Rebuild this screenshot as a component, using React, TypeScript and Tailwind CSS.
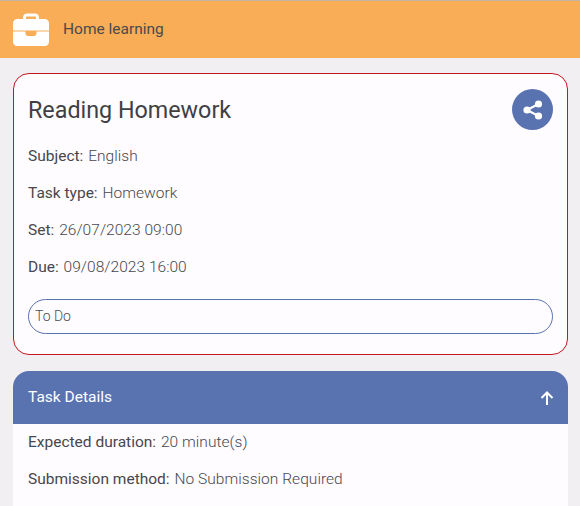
import React from 'react';

const Briefcase = () => (
  <svg width="36" height="33" viewBox="0 0 36 33" fill="#fff">
    <path fillRule="evenodd" d="M10 6V4.500C10 2 12 0.500 14 0.500h8c2 0 4 1.500 4 4V6h-3V4.500c0-.6-.4-1-1-1h-8c-.6 0-1 .4-1 1V6z" />
    <path d="M4 6h28c2 0 4 1.800 4 4v7.500H0V10c0-2.200 2-4 4-4z" />
    <path d="M0 18.500h12.500v1.500c0 2 1 3 2.500 3h6c1.500 0 2.500-1 2.500-3v-1.500H36V29c0 2.200-1.800 4-4 4H4c-2.200 0-4-1.800-4-4z" />
  </svg>
);

const ShareIcon = () => (
  <svg width="20" height="20" viewBox="0 0 20 20" fill="#fff">
    <circle cx="15.500" cy="4" r="3.600" />
    <circle cx="4" cy="10" r="3.600" />
    <circle cx="15.500" cy="16" r="3.600" />
    <path d="M4 10 15.500 4M4 10l11.500 6" stroke="#fff" strokeWidth="2" />
  </svg>
);

const ArrowUp = () => (
  <svg width="14" height="14" viewBox="0 0 14 14" fill="none" stroke="#fff" strokeWidth="2">
    <path d="M7 14V1.500M1.500 7 7 1.500 12.500 7" />
  </svg>
);

const Row = ({ label, value }: { label: string; value: string }) => (
  <p className="text-[15.500px] leading-[20px] text-[#47474d]">
    <span className="font-normal">{label}:</span>{' '}
    <span className="ml-[1px] font-light tracking-[0.04px]">{value}</span>
  </p>
);

export default function App() {
  return (
    <div className="h-[506px] overflow-hidden bg-[#f1eff2] font-['Roboto',sans-serif]">
      <header className="flex h-[58px] items-center gap-[14px] border-t border-[#c4b5a0] bg-[#f8ad56] pl-[13px]">
        <Briefcase />
        <span className="text-[15.500px] text-[#484a50]">Home learning</span>
      </header>

      <main className="flex flex-col gap-[16px] pt-[15px] pr-[12px] pl-[13px]">
        <section className="rounded-[16px] border border-[#c5151f] bg-[#fefcff] pt-[15px] pr-[14px] pb-[20px] pl-[14px]">
          <div className="flex items-start justify-between">
            <h1 className="pt-[7px] text-[23.300px] leading-[28px] text-[#3f3f45]">Reading Homework</h1>
            <button className="flex h-[41px] w-[41px] items-center justify-center rounded-full bg-[#5972b0]">
              <ShareIcon />
            </button>
          </div>
          <div className="mt-[16px] flex flex-col gap-[17px]">
            <Row label="Subject" value="English" />
            <Row label="Task type" value="Homework" />
            <Row label="Set" value="26/07/2023 09:00" />
            <Row label="Due" value="09/08/2023 16:00" />
          </div>
          <div className="mt-[22px] flex h-[35px] items-center rounded-full border border-[#5972b0] px-[6px] text-[14px] font-light text-[#4c4c52]">
            To Do
          </div>
        </section>

        <section className="overflow-hidden rounded-t-[16px] bg-[#fefcff]">
          <div className="flex h-[53px] items-center justify-between bg-[#5972b0] pr-[14px] pl-[15px]">
            <span className="text-[15.500px] text-white">Task Details</span>
            <ArrowUp />
          </div>
          <div className="flex flex-col gap-[17px] px-[15px] pt-[8px] pb-[30px]">
            <Row label="Expected duration" value="20 minute(s)" />
            <Row label="Submission method" value="No Submission Required" />
          </div>
        </section>
      </main>
    </div>
  );
}
